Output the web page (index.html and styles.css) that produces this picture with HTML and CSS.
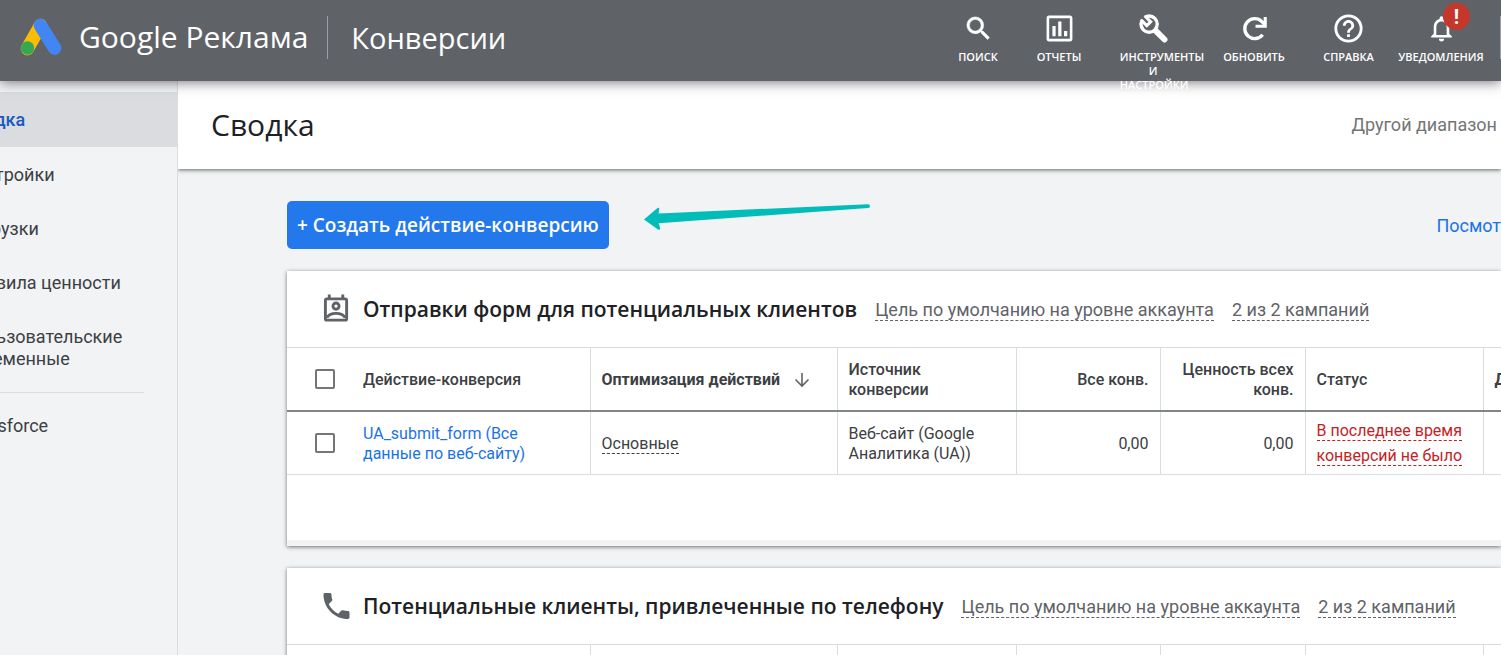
FILE: index.html
```
<!DOCTYPE html>
<html lang="ru">
<head>
<meta charset="utf-8">
<meta name="viewport" content="width=device-width, initial-scale=1">
<title>Конверсии – Google Реклама</title>
<link rel="stylesheet" href="styles.css">
</head>
<body>
<header class="topbar">
  <a class="brand" href="#">
    <svg class="brand-logo" viewBox="0 0 42 38" aria-hidden="true">
      <path d="M20.500 7.500 7.500 30.500" stroke="#fbbc04" stroke-width="13.500" stroke-linecap="round"/>
      <path d="M20.500 7.500 34.500 30" stroke="#4285f4" stroke-width="13.500" stroke-linecap="round"/>
      <circle cx="7.500" cy="30" r="6.700" fill="#34a853"/>
    </svg>
    <span class="brand-name"><span class="brand-google">Google</span> Реклама</span>
  </a>
  <span class="section-name">Конверсии</span>
  <nav class="tools" aria-label="Инструменты">
    <button class="tool tool-search" type="button">
      <svg viewBox="0 0 24 24" aria-hidden="true"><path stroke="#fff" stroke-width=".4" d="M15.500 14h-.79l-.28-.27A6.470 6.470 0 0 0 16 9.500 6.500 6.500 0 1 0 9.500 16c1.610 0 3.090-.59 4.230-1.570l.27.280v.79l5 4.990L20.490 19l-4.990-5zm-6 0C7.010 14 5 11.990 5 9.500S7.010 5 9.500 5 14 7.010 14 9.500 11.990 14 9.500 14z"/></svg>
      <span>ПОИСК</span>
    </button>
    <button class="tool tool-reports" type="button">
      <svg viewBox="0 0 24 24" aria-hidden="true"><path fill-rule="evenodd" d="M20 2H4a2 2 0 0 0-2 2v16a2 2 0 0 0 2 2h16a2 2 0 0 0 2-2V4a2 2 0 0 0-2-2zm0 18H4V4h16zM6.500 10H9v8H6.500zM11 6.500h2.500V18H11zM15.500 14H18v4h-2.500z"/></svg>
      <span>ОТЧЕТЫ</span>
    </button>
    <button class="tool tool-settings" type="button">
      <svg viewBox="0 0 24 24" aria-hidden="true"><path d="M14 14 20.500 20.500" fill="none" stroke="#fff" stroke-width="4.600" stroke-linecap="round"/><circle cx="8.600" cy="8.600" r="6.300" fill="none" stroke="#fff" stroke-width="2.600"/><path d="M.5 2.500 2.500.5 8 6 6 8z" fill="#5f6368"/><path d="M2.500 5.500 6.800 9.800 9.800 6.800 5.500 2.500" fill="none" stroke="#fff" stroke-width="2.400"/></svg>
      <span class="tool-label-left">ИНСТРУМЕНТЫ<br><i>И</i>НАСТРОЙКИ</span>
    </button>
    <button class="tool tool-refresh" type="button">
      <svg viewBox="0 0 24 24" aria-hidden="true"><path d="M18.300 16.800A7.700 7.700 0 1 1 17.600 6.600l2.900 2.600" fill="none" stroke="#fff" stroke-width="2.600"/><path d="M21.500 3v8.500h-8.700V9.100h6.300V3z"/></svg>
      <span>ОБНОВИТЬ</span>
    </button>
    <button class="tool tool-help" type="button">
      <svg viewBox="1 1 22 22" aria-hidden="true"><path d="M11 18h2v-2h-2v2zm1-16a10 10 0 1 0 0 20 10 10 0 0 0 0-20zm0 18c-4.410 0-8-3.590-8-8s3.590-8 8-8 8 3.590 8 8-3.590 8-8 8zm0-14c-2.210 0-4 1.790-4 4h2c0-1.100.9-2 2-2s2 .9 2 2c0 2-3 1.750-3 5h2c0-2.250 3-2.500 3-5 0-2.210-1.790-4-4-4z"/></svg>
      <span>СПРАВКА</span>
    </button>
    <button class="tool tool-alerts" type="button">
      <svg viewBox="0 0 24 24" aria-hidden="true"><path d="M12 22a2 2 0 0 0 2-2h-4a2 2 0 0 0 2 2zm6-6v-5c0-3.070-1.630-5.640-4.500-6.320V4a1.500 1.500 0 0 0-3 0v.68C7.640 5.360 6 7.920 6 11v5l-2 2v1h16v-1l-2-2zm-2 1H8v-6c0-2.480 1.510-4.500 4-4.500s4 2.020 4 4.500v6z"/></svg>
      <span>УВЕДОМЛЕНИЯ</span>
      <b class="alert-badge">!</b>
    </button>
  </nav>
</header>

<div class="layout">
  <nav class="sidebar" aria-label="Разделы">
    <a class="side-link side-link-active" href="#">Сводка</a>
    <a class="side-link" href="#">Настройки</a>
    <a class="side-link" href="#">Загрузки</a>
    <a class="side-link" href="#">Правила ценности</a>
    <a class="side-link" href="#">Пользовательские<br>переменные</a>
    <hr class="side-rule">
    <a class="side-link" href="#">Salesforce</a>
  </nav>

  <main class="content">
    <div class="page-head">
      <h1>Сводка</h1>
      <span class="range">Другой диапазон</span>
    </div>

    <div class="actions">
      <button class="create" type="button">+ Создать действие-конверсию</button>
      <svg class="pointer" viewBox="0 0 228 28" aria-hidden="true"><path d="M1 16.500 14.500 5Q16.500 4 16.300 6L15.600 10.500 225 1.200Q227 1.200 227 3T225 5L15.600 20.200 17 24.500Q17.500 27.500 15 26.500z" fill="#00bdb9"/></svg>
      <a class="more" href="#">Посмот</a>
    </div>

    <section class="card">
      <div class="card-head">
        <svg class="card-icon" viewBox="0 0 28 30" aria-hidden="true"><g fill="none" stroke="#5f6368" stroke-width="3"><rect x="2.500" y="4.500" width="22" height="22" rx="1.500"/><circle cx="13.500" cy="12" r="3.200"/><path d="M4 24c3-6 16-6 19 0"/><path d="M6.500 0v5M20.500 0v5"/></g></svg>
        <h2>Отправки форм для потенциальных клиентов</h2>
        <a class="hint" href="#">Цель по умолчанию на уровне аккаунта</a>
        <a class="hint" href="#">2 из 2 кампаний</a>
      </div>
      <table class="goals">
        <colgroup><col class="c-check"><col class="c-name"><col class="c-opt"><col class="c-src"><col class="c-all"><col class="c-val"><col class="c-status"><col></colgroup>
        <thead>
          <tr>
            <th class="check"><input type="checkbox" aria-label="Выбрать все"></th>
            <th>Действие-конверсия</th>
            <th class="sorted"><span class="sort">Оптимизация действий <svg viewBox="0 0 16 16" aria-hidden="true"><path d="M8 1v13M1.500 7.500 8 14l6.500-6.500" fill="none" stroke="#5f6368" stroke-width="1.600"/></svg></span></th>
            <th>Источник конверсии</th>
            <th class="num">Все конв.</th>
            <th class="num">Ценность всех конв.</th>
            <th>Статус</th>
            <th>Д</th>
          </tr>
        </thead>
        <tbody>
          <tr>
            <td class="check"><input type="checkbox" aria-label="Выбрать UA_submit_form"></td>
            <td class="name-cell"><a class="name" href="#">UA_submit_form (Все данные по веб-сайту)</a></td>
            <td><span class="dashed">Основные</span></td>
            <td>Веб-сайт (Google Аналитика (UA))</td>
            <td class="num">0,00</td>
            <td class="num">0,00</td>
            <td class="status"><span class="dashed">В последнее время конверсий не было</span></td>
            <td></td>
          </tr>
        </tbody>
      </table>
      <div class="card-foot"></div>
    </section>

    <section class="card">
      <div class="card-head">
        <svg class="card-icon card-icon-phone" viewBox="3 3 18 18" aria-hidden="true"><path fill="#5f6368" d="M6.620 10.790c1.440 2.830 3.760 5.140 6.590 6.590l2.200-2.200c.27-.27.67-.36 1.020-.24 1.120.37 2.330.57 3.570.57.55 0 1 .45 1 1V20c0 .55-.45 1-1 1-9.390 0-17-7.610-17-17 0-.55.45-1 1-1h3.500c.55 0 1 .45 1 1 0 1.250.2 2.450.57 3.570.11.350.03.740-.25 1.020l-2.200 2.200z"/></svg>
        <h2>Потенциальные клиенты, привлеченные по телефону</h2>
        <a class="hint" href="#">Цель по умолчанию на уровне аккаунта</a>
        <a class="hint" href="#">2 из 2 кампаний</a>
      </div>
      <table class="goals">
        <colgroup><col class="c-check"><col class="c-name"><col class="c-opt"><col class="c-src"><col class="c-all"><col class="c-val"><col class="c-status"><col></colgroup>
        <thead><tr><th class="check"></th><th></th><th></th><th></th><th></th><th></th><th></th><th></th></tr></thead>
      </table>
    </section>
  </main>
</div>
</body>
</html>
```
FILE: styles.css
```
* { box-sizing: border-box; }
html, body { height: 100%; }
body {
  margin: 0;
  display: flex;
  flex-direction: column;
  overflow: hidden;
  background: #f1f3f4;
  color: #3c4043;
  font: 16px/20px Roboto, sans-serif;
}
a { text-decoration: none; }

.topbar {
  position: relative;
  z-index: 2;
  flex: none;
  display: flex;
  align-items: center;
  height: 81px;
  padding: 0 0 7px 20px;
  background: #5f6368;
  color: #fff;
  box-shadow: 0 1px 12px rgba(60, 50, 60, .7);
}
.topbar::after { content: ""; width: 1px; height: 43px; background: #9aa0a6; }
.brand {
  display: flex;
  align-items: center;
  gap: 17px;
  color: #fff;
}
.brand-logo { width: 42px; height: 38px; fill: none; }
.brand-name, .section-name { font-family: "Open Sans", sans-serif; white-space: nowrap; }
.brand-name { font-size: 30px; line-height: 40px; }
.brand-google { font-weight: 500; }
.section-name {
  height: 43px;
  margin-left: 19px;
  padding-left: 23px;
  border-left: 1px solid #9aa0a6;
  font-size: 29px;
  line-height: 43px;
}
.tools {
  align-self: stretch;
  display: flex;
  align-items: flex-start;
  margin-left: auto;
  padding: 13px 13px 0 0;
}
.tool {
  position: relative;
  display: flex;
  flex-direction: column;
  align-items: center;
  gap: 6px;
  width: 92px;
  padding: 0;
  border: 0;
  background: none;
  color: #fff;
  font: 600 11px/14px "Open Sans", sans-serif;
}
.tool svg { flex: none; width: 31px; height: 31px; fill: #fff; }
.tool-search { width: 80px; }
.tool-reports { width: 82px; }
.tool-settings { width: 106px; }
.tool-refresh { width: 96px; }
.tool-help { width: 93px; }
.tool-label-left { margin-left: 18px; text-align: left; }
.tool-label-left i { display: block; margin-right: 18px; font-style: normal; text-align: center; }
.alert-badge {
  position: absolute;
  top: -10px;
  right: 17px;
  width: 27px;
  height: 27px;
  border-radius: 50%;
  background: #c5372a;
  font: 700 20px/29px Roboto, sans-serif;
}

.layout { flex: 1; display: flex; min-height: 0; }
.sidebar {
  flex: none;
  display: flex;
  flex-direction: column;
  width: 178px;
  padding-top: 11px;
  overflow: hidden;
  border-right: 1px solid #dadce0;
}
.side-link {
  flex: none;
  margin-left: -37px;
  padding: 16px 0;
  color: #3c4043;
  font-size: 18px;
  line-height: 22px;
  white-space: nowrap;
}
.side-link-active { margin-bottom: 1px; padding-top: 17px; background: #dadce0; color: #185abc; font-weight: 500; }
.side-rule { flex: none; width: 144px; margin: 6px 0; border: 0; border-top: 1px solid #dadce0; }

.content { flex: 1; min-width: 0; overflow: hidden; }
.page-head {
  display: flex;
  align-items: center;
  justify-content: space-between;
  height: 88px;
  padding: 0 4px 0 33px;
  background: #fff;
  box-shadow: 0 1px 4px rgba(0, 0, 0, .6);
}
h1, h2 { margin: 0; color: #202124; font-family: "Open Sans", sans-serif; white-space: nowrap; }
h1 { font-size: 30px; line-height: 36px; font-weight: 400; }
.range { color: #757575; font-size: 18px; }

.actions {
  display: flex;
  align-items: center;
  padding: 32px 0 22px 109px;
}
.create {
  height: 48px;
  padding: 0 10px;
  border: 0;
  border-radius: 5px;
  background: #2378eb;
  color: #fff;
  font: 600 19px/24px "Open Sans", sans-serif;
  white-space: nowrap;
}
.pointer { width: 228px; height: 28px; margin: 0 0 16px 34px; }
.more { margin: 2px 0 0 auto; color: #1a73e8; font-size: 18px; line-height: 22px; }

.card {
  margin: 0 0 22px 109px;
  background: #fff;
  box-shadow: 0 1px 4px rgba(0, 0, 0, .55);
}
.card-head {
  display: flex;
  align-items: center;
  gap: 18px;
  height: 76px;
  padding-left: 36px;
}
.card-icon { flex: none; width: 27px; height: 30px; margin-right: -5px; }
.card-icon-phone { height: 26px; }
h2 { font-size: 21px; line-height: 28px; font-weight: 600; }
.hint {
  margin-top: 2px;
  border-bottom: 1px dashed #5f6368;
  color: #5f6368;
  font-size: 18px;
  white-space: nowrap;
}

.goals { width: 100%; table-layout: fixed; border-collapse: collapse; }
.c-check { width: 65px; }
.c-name { width: 238px; }
.c-opt { width: 247px; }
.c-src { width: 179px; }
.c-all { width: 144px; }
.c-val { width: 145px; }
.c-status { width: 178px; }
th, td {
  height: 63px;
  padding: 2px 11px 0;
  border: 1px solid #dadce0;
  border-width: 1px 1px 1px 0;
  text-align: left;
  overflow: hidden;
}
td { height: 64px; padding-top: 3px; }
th { font-weight: 500; border-bottom: 2px solid #80868b; }
th:last-child { font-weight: 700; }
th:last-child, td:last-child { border-right: 0; }
.sorted { font-weight: 700; }
.sort { display: flex; align-items: center; gap: 14px; white-space: nowrap; }
.sort svg { width: 16px; height: 16px; }
.check { padding: 0 0 0 28px; border-right: 0; }
.check input {
  appearance: none;
  display: block;
  width: 20px;
  height: 20px;
  margin: 0;
  border: 2px solid #757575;
  border-radius: 2px;
  background: #fff;
}
.num { text-align: right; }
.name-cell { padding-right: 48px; }
.name { color: #1a73e8; }
.dashed { border-bottom: 1px dashed #3c4043; }
.status { padding-top: 1px; line-height: 25px; color: #c5221f; }
.status .dashed { border-color: #c5221f; }
.card-foot { height: 71px; border-bottom: 6px solid #f1f3f4; }
```
